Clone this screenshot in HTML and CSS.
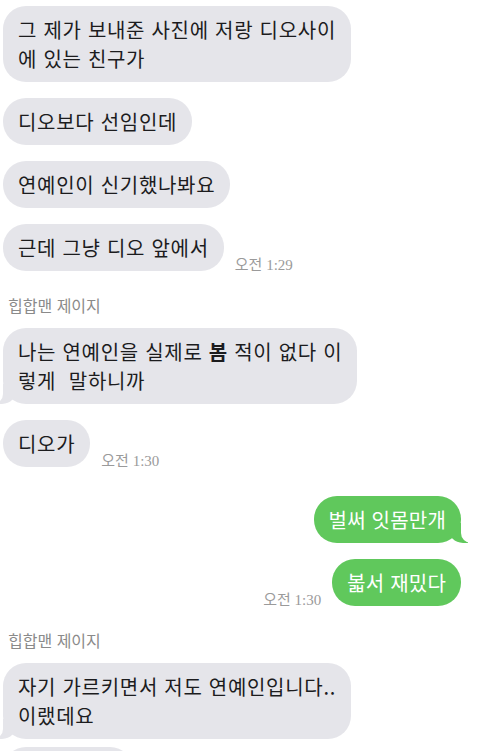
FILE: index.html
```html
<!DOCTYPE html>
<html lang="ko">
<head>
    <meta charset="UTF-8" />
    <title>Chat</title>
    <link rel="stylesheet" href="styles.css">
</head>
<body>
    <div class="chat">
        <div class="row">
            <div class="bubble">그 제가 보내준 사진에 저랑 디오사이<br>에 있는 친구가</div>
        </div>
        <div class="row">
            <div class="bubble">디오보다 선임인데</div>
        </div>
        <div class="row">
            <div class="bubble">연예인이 신기했나봐요</div>
        </div>
        <div class="row">
            <div class="bubble">근데 그냥 디오 앞에서</div>
            <span class="time">오전 1:29</span>
        </div>

        <div class="name">힙합맨 제이지</div>
        <div class="row">
            <div class="bubble tail">나는 연예인을 실제로 <b>봄</b> 적이 없다 이<br>렇게&nbsp; 말하니까</div>
        </div>
        <div class="row last">
            <div class="bubble">디오가</div>
            <span class="time">오전 1:30</span>
        </div>

        <div class="row me">
            <div class="bubble green tail">벌써 잇몸만개</div>
        </div>
        <div class="row me">
            <span class="time">오전 1:30</span>
            <div class="bubble green">볿서 재밌다</div>
        </div>

        <div class="name">힙합맨 제이지</div>
        <div class="row">
            <div class="bubble tail">자기 가르키면서 저도 연예인입니다..<br>이랬데요</div>
        </div>
        <div class="row cut">
            <div class="bubble empty"></div>
        </div>
    </div>
</body>
</html>
```

FILE: styles.css
```css
body {
    margin: 0;
    background: #fff;
    font-family: 'Noto Sans CJK KR', sans-serif;
    color: #1c1c1e;
}
.chat {
    display: flex;
    flex-direction: column;
    padding: 6px 17px 0 3px;
}
.row {
    display: flex;
    align-items: flex-end;
    margin-bottom: 16px;
}
.row.me {
    justify-content: flex-end;
}
.row.me .bubble {
    margin-right: 2px;
}
.row.last {
    margin-bottom: 29px;
}
.row.cut {
    margin-top: -8px;
}
.bubble {
    position: relative;
    background: #e5e5ea;
    border-radius: 23px;
    padding: 9px 15px;
    font-size: 20px;
    line-height: 29px;
    white-space: nowrap;
    letter-spacing: 0.7px;
}
.bubble b {
    font-weight: 700;
}
.bubble.green {
    background: #60c85c;
    color: #fff;
    letter-spacing: 0.2px;
}
.bubble.empty {
    width: 100px;
    height: 29px;
}
.bubble.tail::before {
    content: "";
    position: absolute;
    bottom: 0;
    left: -6px;
    width: 20px;
    height: 20px;
    background: #e5e5ea;
    border-bottom-right-radius: 15px;
}
.bubble.tail::after {
    content: "";
    position: absolute;
    bottom: 0;
    left: -26px;
    width: 26px;
    height: 20px;
    background: #fff;
    border-bottom-right-radius: 10px;
}
.bubble.green.tail::before {
    left: auto;
    right: -7px;
    background: #60c85c;
    border-bottom-right-radius: 0;
    border-bottom-left-radius: 15px;
}
.bubble.green.tail::after {
    left: auto;
    right: -26px;
    border-bottom-right-radius: 0;
    border-bottom-left-radius: 10px;
}
.time {
    font-family: 'Liberation Serif', 'Noto Sans CJK KR', serif;
    font-size: 15px;
    line-height: 22px;
    color: #9a9a9a;
    margin: 0 0 -5px 11px;
    white-space: nowrap;
}
.row.me .time {
    margin: 0 11px -5px 0;
}
.name {
    font-size: 16px;
    line-height: 24px;
    color: #8a8a8a;
    margin: 6px 0 11px 5px;
}
```
